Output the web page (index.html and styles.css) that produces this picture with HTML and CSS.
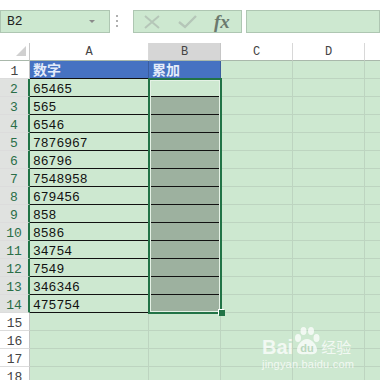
FILE: index.html
```html
<!DOCTYPE html>
<html lang="zh-CN">
<head>
    <meta charset="UTF-8">
    <meta name="viewport" content="width=device-width, initial-scale=1.0">
    <title>累加</title>
    <link rel="stylesheet" href="styles.css">
</head>
<body>
    <div class="formula-bar">
        <div class="name-box">
            <span class="name">B2</span>
            <span class="arrow"></span>
        </div>
        <div class="grip"><i></i><i></i><i></i></div>
        <div class="fx-buttons">
            <svg class="btn-cancel" width="18" height="14" viewBox="0 0 18 14">
                <path d="M2 1 L16 13 M16 1 L2 13" stroke="#b5c6b8" stroke-width="2" fill="none"/>
            </svg>
            <svg class="btn-enter" width="20" height="14" viewBox="0 0 20 14">
                <path d="M2 7 L8 12 L19 1" stroke="#b5c6b8" stroke-width="2.4" fill="none"/>
            </svg>
            <span class="fx">fx</span>
        </div>
        <div class="formula-input"></div>
    </div>

    <div class="sheet">
        <div class="row">
            <div class="cell corner">
                <svg width="10" height="10" viewBox="0 0 10 10"><polygon points="10,0 10,10 0,10" fill="#d0d0d0"/></svg>
            </div>
            <div class="cell ch">A</div>
            <div class="cell ch on">B</div>
            <div class="cell ch">C</div>
            <div class="cell ch">D</div>
            <div class="cell ch"></div>
        </div>
        <div class="row">
            <div class="cell rh">1</div>
            <div class="cell title">数字</div>
            <div class="cell title">累加</div>
            <div class="cell"></div><div class="cell"></div><div class="cell"></div>
        </div>
        <div class="row">
            <div class="cell rh on">2</div>
            <div class="cell num">65465</div>
            <div class="cell sum active"></div>
            <div class="cell"></div><div class="cell"></div><div class="cell"></div>
        </div>
        <div class="row">
            <div class="cell rh on">3</div>
            <div class="cell num">565</div>
            <div class="cell sum"></div>
            <div class="cell"></div><div class="cell"></div><div class="cell"></div>
        </div>
        <div class="row">
            <div class="cell rh on">4</div>
            <div class="cell num">6546</div>
            <div class="cell sum"></div>
            <div class="cell"></div><div class="cell"></div><div class="cell"></div>
        </div>
        <div class="row">
            <div class="cell rh on">5</div>
            <div class="cell num">7876967</div>
            <div class="cell sum"></div>
            <div class="cell"></div><div class="cell"></div><div class="cell"></div>
        </div>
        <div class="row">
            <div class="cell rh on">6</div>
            <div class="cell num">86796</div>
            <div class="cell sum"></div>
            <div class="cell"></div><div class="cell"></div><div class="cell"></div>
        </div>
        <div class="row">
            <div class="cell rh on">7</div>
            <div class="cell num">7548958</div>
            <div class="cell sum"></div>
            <div class="cell"></div><div class="cell"></div><div class="cell"></div>
        </div>
        <div class="row">
            <div class="cell rh on">8</div>
            <div class="cell num">679456</div>
            <div class="cell sum"></div>
            <div class="cell"></div><div class="cell"></div><div class="cell"></div>
        </div>
        <div class="row">
            <div class="cell rh on">9</div>
            <div class="cell num">858</div>
            <div class="cell sum"></div>
            <div class="cell"></div><div class="cell"></div><div class="cell"></div>
        </div>
        <div class="row">
            <div class="cell rh on">10</div>
            <div class="cell num">8586</div>
            <div class="cell sum"></div>
            <div class="cell"></div><div class="cell"></div><div class="cell"></div>
        </div>
        <div class="row">
            <div class="cell rh on">11</div>
            <div class="cell num">34754</div>
            <div class="cell sum"></div>
            <div class="cell"></div><div class="cell"></div><div class="cell"></div>
        </div>
        <div class="row">
            <div class="cell rh on">12</div>
            <div class="cell num">7549</div>
            <div class="cell sum"></div>
            <div class="cell"></div><div class="cell"></div><div class="cell"></div>
        </div>
        <div class="row">
            <div class="cell rh on">13</div>
            <div class="cell num">346346</div>
            <div class="cell sum"></div>
            <div class="cell"></div><div class="cell"></div><div class="cell"></div>
        </div>
        <div class="row">
            <div class="cell rh on">14</div>
            <div class="cell num">475754</div>
            <div class="cell sum"></div>
            <div class="cell"></div><div class="cell"></div><div class="cell"></div>
        </div>
        <div class="row">
            <div class="cell rh">15</div>
            <div class="cell"></div><div class="cell"></div><div class="cell"></div><div class="cell"></div><div class="cell"></div>
        </div>
        <div class="row">
            <div class="cell rh">16</div>
            <div class="cell"></div><div class="cell"></div><div class="cell"></div><div class="cell"></div><div class="cell"></div>
        </div>
        <div class="row">
            <div class="cell rh">17</div>
            <div class="cell"></div><div class="cell"></div><div class="cell"></div><div class="cell"></div><div class="cell"></div>
        </div>
        <div class="row">
            <div class="cell rh">18</div>
            <div class="cell"></div><div class="cell"></div><div class="cell"></div><div class="cell"></div><div class="cell"></div>
        </div>

        <!-- selected range B2:B14 -->
        <div class="selection"></div>
        <div class="fill-handle"></div>

        <div class="watermark">
            <div class="logo">
                <span class="bai">Bai</span>
                <svg class="paw" width="26" height="30" viewBox="0 0 26 30">
                    <ellipse cx="4" cy="12" rx="3" ry="4" fill="#fff"/>
                    <ellipse cx="9.5" cy="5" rx="3" ry="4" fill="#fff"/>
                    <ellipse cx="17" cy="5" rx="3" ry="4" fill="#fff"/>
                    <ellipse cx="22.5" cy="12" rx="3" ry="4" fill="#fff"/>
                    <path d="M13 13 C8 13 3 19 3 24 C3 28 7 29 13 28 C19 29 23 28 23 24 C23 19 18 13 13 13 Z" fill="#fff"/>
                    <text x="13" y="26" text-anchor="middle" class="du">du</text>
                </svg>
                <span class="jy">经验</span>
            </div>
            <div class="site">jingyan.baidu.com</div>
        </div>
    </div>
</body>
</html>
```

FILE: styles.css
```css
body {
    margin: 0;
    width: 380px;
    height: 380px;
    overflow: hidden;
    background-color: #cde8d0;
    font-family: "Liberation Mono", monospace;
}

/* formula bar */
.formula-bar {
    display: flex;
    align-items: flex-start;
    height: 43px;
    box-sizing: border-box;
    padding-top: 10px;
    background-color: #fff;
}

.name-box, .fx-buttons, .formula-input {
    height: 23px;
    box-sizing: border-box;
    border: 1px solid #aec6b2;
    background-color: #cde8d0;
}

.name-box {
    display: flex;
    align-items: center;
    justify-content: space-between;
    width: 110px;
    padding: 0 14px 0 6px;
}

.name {
    font-size: 13px;
    color: #222;
}

.arrow {
    width: 0;
    height: 0;
    border-left: 3px solid transparent;
    border-right: 3px solid transparent;
    border-top: 3px solid #8a8a8a;
}

.grip {
    display: flex;
    flex-direction: column;
    gap: 3px;
    width: 2px;
    margin: 5px 15px 0 6px;
}

.grip i {
    display: block;
    width: 2px;
    height: 2px;
    background-color: #b0b0b0;
}

.fx-buttons {
    display: flex;
    align-items: center;
    width: 109px;
    padding-left: 9px;
}

.btn-enter {
    margin-left: 16px;
}

.fx {
    margin-left: 17px;
    font-family: "Liberation Serif", serif;
    font-style: italic;
    font-weight: bold;
    font-size: 19px;
    color: #6b7a6e;
}

.formula-input {
    flex: 1;
    margin-left: 4px;
}

/* sheet */
.sheet {
    position: relative;
}

.row {
    display: grid;
    grid-template-columns: 30px 119px 72px 72px 72px 72px;
    height: 18px;
}

.cell {
    box-sizing: border-box;
    border-right: 1px solid #bdd4c0;
    border-bottom: 1px solid #bdd4c0;
    padding: 1px 0 0 3px;
    font-size: 13px;
    line-height: 20px;
    color: #111;
    white-space: nowrap;
    overflow: hidden;
}

.corner {
    display: flex;
    align-items: flex-end;
    justify-content: flex-end;
    padding: 0 3px 4px 0;
    background-color: #fff;
    border-right: 1px solid #c8c8c8;
    border-bottom: 1px solid #a9b8ab;
}

.ch {
    padding: 0;
    text-align: center;
    font-size: 12px;
    line-height: 18px;
    color: #444;
    background-color: #fff;
    border-right: 1px solid #d8d8d8;
    border-bottom: 1px solid #a9b8ab;
}

.ch.on {
    background-color: #d6d6d6;
    border-right-color: #c6c6c6;
}

.rh {
    padding: 1px 0 0 0;
    text-align: center;
    color: #444;
    background-color: #fff;
    border-right: 1px solid #c4c4c4;
    border-bottom: 1px solid #dcdcdc;
}

.rh.on {
    color: #2a6e47;
    background-color: #e0e2e0;
    border-right: 2px solid #217346;
}

.title {
    padding: 0 0 0 3px;
    font-family: "Noto Sans CJK SC", sans-serif;
    font-weight: bold;
    font-size: 14px;
    line-height: 17px;
    color: #e4ecfa;
    background-color: #4672c2;
    border-right: 1px solid #3a5d9e;
    border-bottom: 1px solid #111;
    overflow: visible;
}

.num {
    border-bottom: 1px solid #111;
}

.sum {
    background-color: #9db19f;
    border-bottom: 1px solid #111;
}

.sum.active {
    background-color: #cde8d0;
}

.selection {
    position: absolute;
    left: 148px;
    top: 35px;
    width: 74px;
    height: 236px;
    box-sizing: border-box;
    border: 2px solid #217346;
    box-shadow: inset 0 0 0 1px #e4f1e5;
}

.fill-handle {
    position: absolute;
    left: 219px;
    top: 267px;
    width: 6px;
    height: 6px;
    background-color: #217346;
    box-shadow: -1px -1px 0 0 #fff;
}

/* watermark */
.watermark {
    position: absolute;
    left: 262px;
    top: 283px;
    opacity: 0.75;
    color: #fff;
    font-family: "Liberation Sans", sans-serif;
}

.logo {
    display: flex;
    align-items: flex-end;
}

.bai {
    font-size: 20px;
    font-weight: bold;
    line-height: 18px;
}

.paw {
    margin: 0 1px 0 1px;
}

.du {
    font-family: "Liberation Sans", sans-serif;
    font-weight: bold;
    font-size: 11px;
    fill: #b5d4b9;
}

.jy {
    font-family: "Noto Sans CJK SC", sans-serif;
    font-size: 15px;
    line-height: 18px;
}

.site {
    margin-top: 2px;
    font-size: 11px;
    letter-spacing: 0.2px;
}
```
